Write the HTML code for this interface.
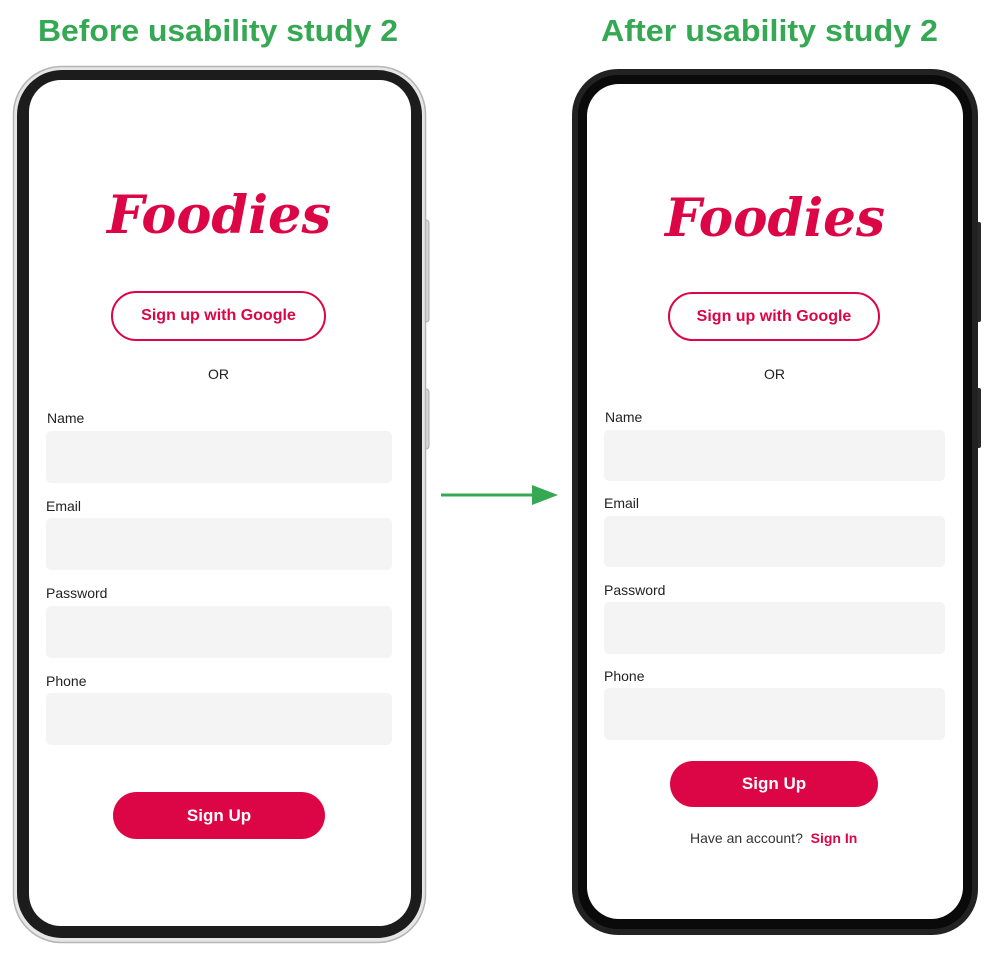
<!DOCTYPE html>
<html><head><meta charset="utf-8"><style>
*{margin:0;padding:0;box-sizing:border-box}
body{width:993px;height:953px;background:#fff;position:relative;overflow:hidden;font-family:"Liberation Sans",Arial,sans-serif}
.a{position:absolute}
.lbl{position:absolute;font-size:14px;color:#222;line-height:16px}
.fld{position:absolute;background:#f4f4f4;border-radius:5px}
.gbtn{position:absolute;border:2px solid #dc0545;border-radius:26px;color:#dc0545;font-weight:bold;font-size:16px;display:flex;align-items:center;justify-content:center}
.sbtn{position:absolute;background:#dc0545;border-radius:24px;color:#fff;font-weight:bold;font-size:17px;display:flex;align-items:center;justify-content:center}
</style></head><body>
<svg class="a" style="left:0;top:0" width="993" height="953">
<text x="38" y="41" textLength="360" lengthAdjust="spacingAndGlyphs" font-family="Liberation Sans" font-weight="bold" font-size="31" fill="#34a853">Before usability study 2</text>
<text x="601" y="41" textLength="337" lengthAdjust="spacingAndGlyphs" font-family="Liberation Sans" font-weight="bold" font-size="31" fill="#34a853">After usability study 2</text>
<!-- left phone -->
<rect x="423" y="220" width="6" height="102" rx="3" fill="#d6d6d6" stroke="#aaa"/>
<rect x="423" y="389" width="6" height="60" rx="3" fill="#d6d6d6" stroke="#aaa"/>
<rect x="13.5" y="66.5" width="412" height="876" rx="48" fill="#e6e6e6" stroke="#b5b5b5" stroke-width="1.5"/>
<rect x="17" y="70" width="405" height="868" rx="45" fill="#1c1c1c"/>
<rect x="29" y="80" width="382" height="846" rx="32" fill="#fff"/>
<!-- right phone -->
<rect x="974" y="222" width="7" height="100" rx="2" fill="#2a2a2a"/>
<rect x="974" y="388" width="7" height="60" rx="2" fill="#2a2a2a"/>
<rect x="572" y="69" width="406" height="866" rx="46" fill="#222"/>
<rect x="578" y="75" width="394" height="854" rx="40" fill="#0a0a0a"/>
<rect x="587" y="84" width="376" height="835" rx="32" fill="#fff"/>
<!-- arrow -->
<line x1="441" y1="495" x2="535" y2="495" stroke="#34a853" stroke-width="3"/>
<polygon points="532,485 558,495 532,505" fill="#34a853"/>
<!-- logos -->
<text x="107" y="233" textLength="224" lengthAdjust="spacingAndGlyphs" font-family="DejaVu Serif" font-weight="bold" font-style="italic" font-size="52" fill="#dc0545">Foodies</text>
<text x="665" y="236" textLength="220" lengthAdjust="spacingAndGlyphs" font-family="DejaVu Serif" font-weight="bold" font-style="italic" font-size="52" fill="#dc0545">Foodies</text>
</svg>
<!-- left screen -->
<div class="gbtn" style="left:111px;top:291px;width:215px;height:50px">Sign up with Google</div>
<div class="lbl" style="left:208px;top:366px">OR</div>
<div class="lbl" style="left:47px;top:410px">Name</div>
<div class="fld" style="left:46px;top:431px;width:346px;height:52px"></div>
<div class="lbl" style="left:46px;top:498px">Email</div>
<div class="fld" style="left:46px;top:518px;width:346px;height:52px"></div>
<div class="lbl" style="left:46px;top:585px">Password</div>
<div class="fld" style="left:46px;top:606px;width:346px;height:52px"></div>
<div class="lbl" style="left:46px;top:673px">Phone</div>
<div class="fld" style="left:46px;top:693px;width:346px;height:52px"></div>
<div class="sbtn" style="left:113px;top:792px;width:212px;height:47px">Sign Up</div>
<!-- right screen -->
<div class="gbtn" style="left:668px;top:292px;width:212px;height:49px">Sign up with Google</div>
<div class="lbl" style="left:764px;top:366px">OR</div>
<div class="lbl" style="left:605px;top:409px">Name</div>
<div class="fld" style="left:604px;top:430px;width:341px;height:51px"></div>
<div class="lbl" style="left:604px;top:495px">Email</div>
<div class="fld" style="left:604px;top:516px;width:341px;height:51px"></div>
<div class="lbl" style="left:604px;top:582px">Password</div>
<div class="fld" style="left:604px;top:602px;width:341px;height:52px"></div>
<div class="lbl" style="left:604px;top:668px">Phone</div>
<div class="fld" style="left:604px;top:688px;width:341px;height:52px"></div>
<div class="sbtn" style="left:670px;top:761px;width:208px;height:46px">Sign Up</div>
<div class="lbl" style="left:690px;top:830px;color:#333">Have an account?&nbsp; <b style="color:#dc0545">Sign In</b></div>
</body></html>
